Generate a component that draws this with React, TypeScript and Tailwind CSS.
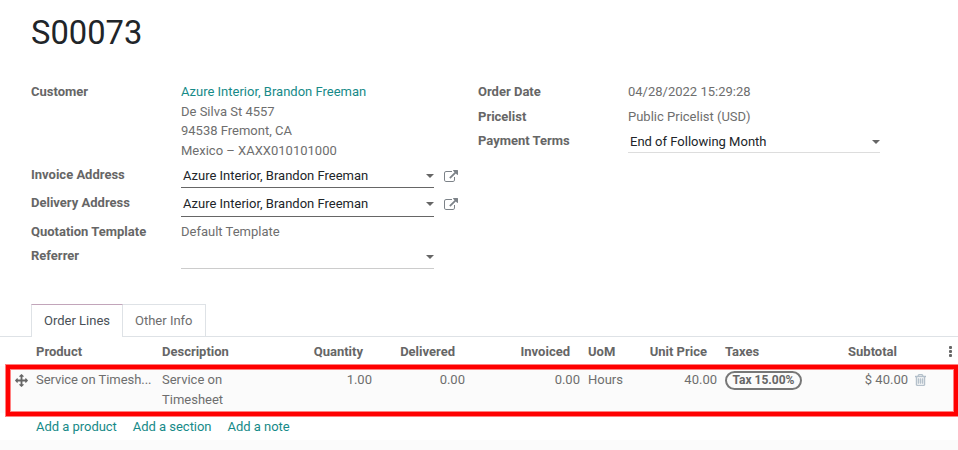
import type { ReactNode } from "react";

const ICONS = {
  external:
    "M1408 928v320q0 119-84.5 203.5T1120 1536H288q-119 0-203.5-84.5T0 1248V416q0-119 84.5-203.5T288 128h704q14 0 23 9t9 23v64q0 14-9 23t-23 9H288q-66 0-113 47t-47 113v832q0 66 47 113t113 47h832q66 0 113-47t47-113V928q0-14 9-23t23-9h64q14 0 23 9t9 23zm384-864v512q0 26-19 45t-45 19-45-19l-176-176-652 652q-10 10-23 10t-23-10L695 983q-10-10-10-23t10-23l652-652-176-176q-19-19-19-45t19-45 45-19h512q26 0 45 19t19 45z",
  move: "M1792 896q0 26-19 45l-256 256q-19 19-45 19t-45-19-19-45v-128h-384v384h128q26 0 45 19t19 45-19 45l-256 256q-19 19-45 19t-45-19l-256-256q-19-19-19-45t19-45 45-19h128v-384h-384v128q0 26-19 45t-45 19-45-19l-256-256q-19-19-19-45t19-45l256-256q19-19 45-19t45 19 19 45v128h384v-384h-128q-26 0-45-19t-19-45 19-45l256-256q19-19 45-19t45 19l256 256q19 19 19 45t-19 45-45 19h-128v384h384v-128q0-26 19-45t45-19 45 19l256 256q19 19 19 45z",
  trash:
    "M704 736v576q0 14-9 23t-23 9h-64q-14 0-23-9t-9-23v-576q0-14 9-23t23-9h64q14 0 23 9t9 23zm256 0v576q0 14-9 23t-23 9h-64q-14 0-23-9t-9-23v-576q0-14 9-23t23-9h64q14 0 23 9t9 23zm256 0v576q0 14-9 23t-23 9h-64q-14 0-23-9t-9-23v-576q0-14 9-23t23-9h64q14 0 23 9t9 23zm128 724v-948h-896v948q0 22 7 40.5t14.5 27 10.5 8.5h832q3 0 10.5-8.5t14.5-27 7-40.5zm-672-1076h448l-48-117q-7-9-17-11h-317q-10 2-17 11zm928 32v64q0 14-9 23t-23 9h-96v948q0 83-47 143.5t-113 60.5h-832q-66 0-113-58.5t-47-141.5v-952h-96q-14 0-23-9t-9-23v-64q0-14 9-23t23-9h309l70-167q15-37 54-63t79-26h320q40 0 79 26t54 63l70 167h309q14 0 23 9t9 23z",
};

function Icon({ d, box = "0 0 1792 1792", className }: { d: string; box?: string; className: string }) {
  return (
    <svg viewBox={box} className={className} fill="currentColor">
      <path d={d} />
    </svg>
  );
}

function Row({ label, className, children }: { label: string; className: string; children?: ReactNode }) {
  return (
    <div className={`flex items-start ${className}`}>
      <div className="w-[150px] shrink-0 font-bold text-[#666]">{label}</div>
      {children}
    </div>
  );
}

function Select({ value, className }: { value?: string; className: string }) {
  return (
    <div className={`flex items-center justify-between border-b pl-0.5 text-[#212529] ${className}`}>
      <span>{value}</span>
      <svg viewBox="0 0 8 4" className="h-1 w-2" fill="#666">
        <path d="M0 0h8L4 4z" />
      </svg>
    </div>
  );
}

const COLS = "grid grid-cols-[36px_126px_122px_93px_93px_115px_135px_141px_54px_43px]";

export default function App() {
  return (
    <div className="relative h-[450px] w-[958px] overflow-hidden bg-white font-['Roboto',sans-serif] text-[13px] leading-[19.5px] text-[#6e6e6e]">
      <h1 className="h-[82px] pl-[31px] pt-[13px] text-[32.7px] leading-10 text-[#212529]">S00073</h1>

      <div className="flex h-[222px] pl-[31px]">
        <div className="w-[447px]">
          <Row label="Customer" className="h-[83px]">
            <div>
              <div className="text-[#168a88]">Azure Interior, Brandon Freeman</div>
              <div>De Silva St 4557</div>
              <div>94538 Fremont, CA</div>
              <div>Mexico – XAXX010101000</div>
            </div>
          </Row>
          <Row label="Invoice Address" className="h-[28px]">
            <Select value="Azure Interior, Brandon Freeman" className="h-[23px] w-[253px] border-[#666]" />
            <Icon d={ICONS.external} box="0 0 1792 1536" className="ml-2.5 mt-[5px] h-3 w-[14px] text-[#7c8288]" />
          </Row>
          <Row label="Delivery Address" className="h-[29px]">
            <Select value="Azure Interior, Brandon Freeman" className="h-6 w-[253px] border-[#666] pb-px" />
            <Icon d={ICONS.external} box="0 0 1792 1536" className="ml-2.5 mt-[5px] h-3 w-[14px] text-[#7c8288]" />
          </Row>
          <Row label="Quotation Template" className="h-[24px]">
            <div>Default Template</div>
          </Row>
          <Row label="Referrer" className="h-[25px]">
            <Select className="h-[23px] w-[253px] border-[#ccc]" />
          </Row>
        </div>
        <div>
          <Row label="Order Date" className="h-[25px]">
            <div>04/28/2022 15:29:28</div>
          </Row>
          <Row label="Pricelist" className="h-[24px]">
            <div>Public Pricelist (USD)</div>
          </Row>
          <Row label="Payment Terms" className="h-[25px]">
            <Select value="End of Following Month" className="h-[22px] w-[252px] border-[#ddd]" />
          </Row>
        </div>
      </div>

      <div className="flex h-[33px] border-b border-[#dee2e6] pl-[31px]">
        <div className="h-[33px] w-[92px] border-x border-t border-x-[#dee2e6] border-t-[#c2a5ba] bg-white pl-3 pt-1.5 text-[#495057]">
          Order Lines
        </div>
        <div className="h-[32px] w-[83px] border-r border-t border-[#dee2e6] pl-3 pt-1.5">Other Info</div>
      </div>

      <div className={`${COLS} h-[29px] pt-[5px] font-bold text-[#666]`}>
        <div />
        <div>Product</div>
        <div>Description</div>
        <div className="pr-3.5 text-right">Quantity</div>
        <div className="pr-[15px] text-right">Delivered</div>
        <div className="pr-[15px] text-right">Invoiced</div>
        <div className="flex justify-between pl-[3px] pr-[13px]">
          <span>UoM</span>
          <span>Unit Price</span>
        </div>
        <div className="pl-[5px]">Taxes</div>
        <div className="-ml-4 pr-[18px] text-right">Subtotal</div>
        <div className="flex flex-col items-end gap-px pr-1.5 pt-1">
          <i className="size-[3px] rounded-[1px] bg-[#666]" />
          <i className="size-[3px] rounded-[1px] bg-[#666]" />
          <i className="size-[3px] rounded-[1px] bg-[#666]" />
        </div>
      </div>

      <div className={`${COLS} h-[47px] bg-[#fbfbfb] pt-1`}>
        <div className="pl-[15px] pt-[4px]">
          <Icon d={ICONS.move} className="size-[13px] text-[#666]" />
        </div>
        <div className="tracking-[-0.05px]">Service on Timesh...</div>
        <div className="w-20">Service on Timesheet</div>
        <div className="pr-[5px] text-right">1.00</div>
        <div className="pr-[5px] text-right">0.00</div>
        <div className="pr-[5px] text-right">0.00</div>
        <div className="flex justify-between pl-[3px] pr-[3px]">
          <span>Hours</span>
          <span>40.00</span>
        </div>
        <div className="pl-[5px]">
          <div className="mt-px h-[19px] w-[77px] rounded-full border-2 border-[#777] text-center text-[12px] font-bold leading-[15px] text-[#666]">
            Tax 15.00%
          </div>
        </div>
        <div className="pr-[7px] text-right">$ 40.00</div>
        <div className="pt-1">
          <svg viewBox="192 128 1408 1536" className="h-[12px] w-[11px] text-[#b5c0cb]" fill="currentColor">
            <path d={ICONS.trash} stroke="currentColor" strokeWidth="60" />
          </svg>
        </div>
      </div>

      <div className="flex h-[27px] gap-4 pl-9 pt-1 tracking-[-0.03px] text-[#168a88]">
        <span>Add a product</span>
        <span>Add a section</span>
        <span>Add a note</span>
      </div>
      <div className="h-2.5 bg-[#fbfbfb]" />

      <div className="absolute left-[6px] top-[365px] h-[51px] w-[952px] border-4 border-[#f00] shadow-[0_0_0_1px_#ff8080,inset_0_0_0_1px_#ff8080]" />
    </div>
  );
}
